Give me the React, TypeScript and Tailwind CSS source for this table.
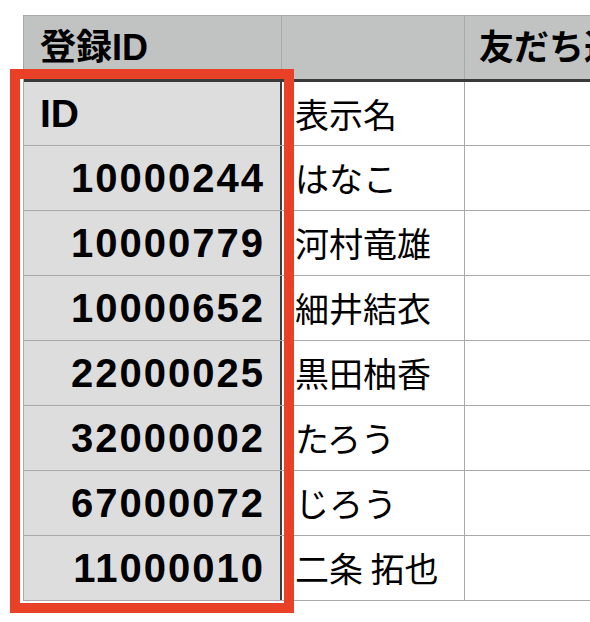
import React from 'react';

const rows = [
  { id: '10000244', name: 'はなこ' },
  { id: '10000779', name: '河村竜雄' },
  { id: '10000652', name: '細井結衣' },
  { id: '22000025', name: '黒田柚香' },
  { id: '32000002', name: 'たろう' },
  { id: '67000072', name: 'じろう' },
  { id: '11000010', name: '二条 拓也' },
];

const latin = 'font-["Liberation_Sans","Noto_Sans_CJK_JP",sans-serif]';
const cjk = 'font-["Noto_Sans_CJK_JP",sans-serif]';

export default function App() {
  return (
    <div className="relative w-[590px] h-[622px] overflow-hidden bg-white text-black">
      <div className="pl-[23px] pt-[15px]">
        <div className="w-[640px] border-t border-l border-[#a9a9a9]">
          {/* Header */}
          <div className={`flex h-[66px] bg-[#c1c3c2] border-b-[3px] border-[#3a3a3a] ${latin}`}>
            <div className="w-[258px] shrink-0 border-r border-[#a9a9a9] flex items-center pl-[16px] text-[36px] font-bold leading-none">
              登録ID
            </div>
            <div className="w-[183px] shrink-0 border-r border-[#a9a9a9]" />
            <div className="flex-1 flex items-center pl-[14px] text-[35px] font-bold leading-none whitespace-nowrap">
              友だち追加日
            </div>
          </div>

          {/* ID label row */}
          <div className="flex h-[64px] border-b border-[#a9a9a9]">
            <div className={`w-[258px] shrink-0 bg-[#dddddd] border-r-2 border-[#3a3a3a] flex items-center pl-[16px] text-[39px] font-bold leading-none ${latin}`}>
              ID
            </div>
            <div className={`w-[183px] shrink-0 border-r border-[#a9a9a9] flex items-center pl-[13px] text-[34px] leading-none ${cjk}`}>
              表示名
            </div>
            <div className="flex-1" />
          </div>

          {rows.map((r) => (
            <div key={r.id} className="flex h-[65px] border-b border-[#a9a9a9]">
              <div className={`w-[258px] shrink-0 bg-[#dddddd] border-r-2 border-[#3a3a3a] flex items-center justify-end pr-[15px] text-[40px] font-bold tracking-[2px] leading-none ${latin}`}>
                {r.id}
              </div>
              <div className={`w-[183px] shrink-0 border-r border-[#a9a9a9] flex items-center pl-[13px] text-[34px] leading-none whitespace-nowrap ${cjk}`}>
                {r.name}
              </div>
              <div className="flex-1" />
            </div>
          ))}
        </div>
      </div>

      {/* highlight frame */}
      <div className="absolute left-[10px] top-[69px] w-[284px] h-[544px] border-[10px] border-[#e94128] pointer-events-none" />
    </div>
  );
}
